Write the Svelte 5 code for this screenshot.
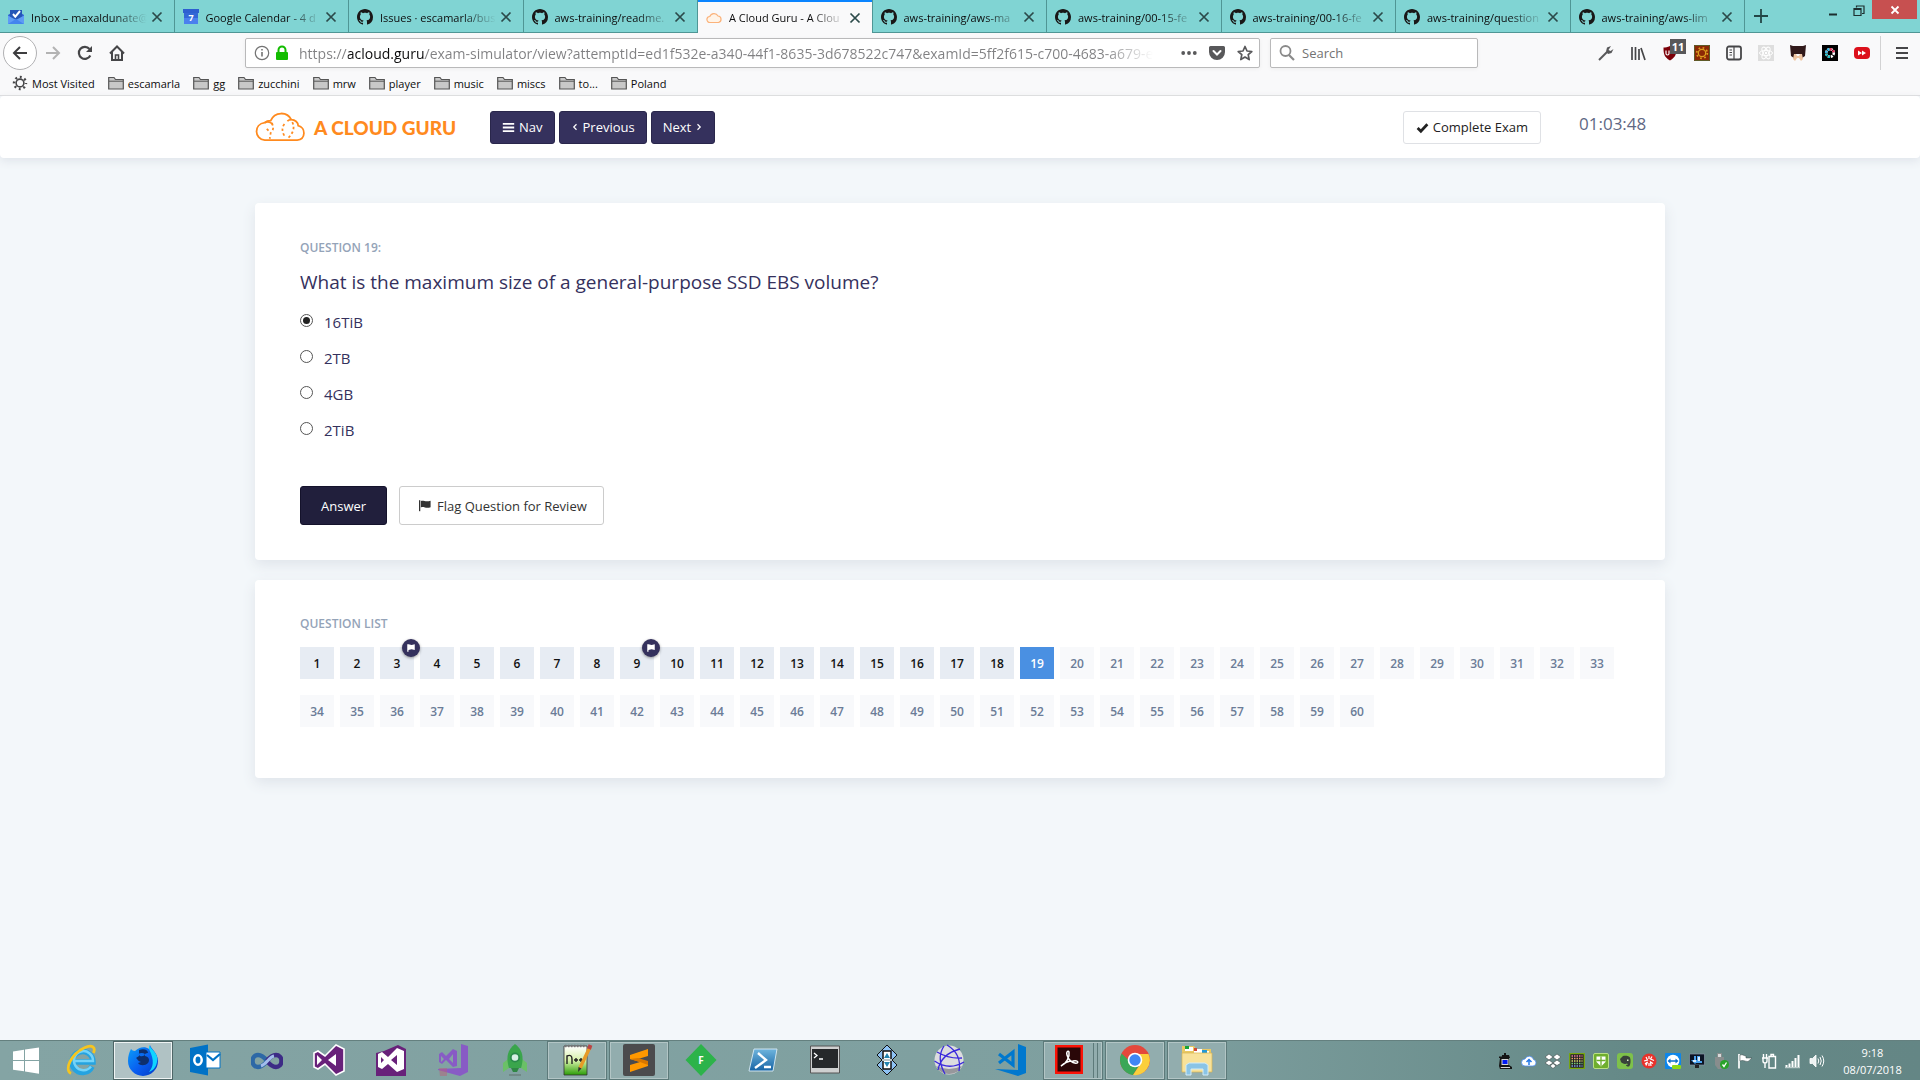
<script>
  const github = '<path fill="#191717" d="M8 0C3.58 0 0 3.58 0 8c0 3.54 2.29 6.53 5.47 7.59.4.07.55-.17.55-.38 0-.19-.01-.82-.01-1.49-2.01.37-2.53-.49-2.69-.94-.09-.23-.48-.94-.82-1.13-.28-.15-.68-.52-.01-.53.63-.01 1.08.58 1.23.82.72 1.21 1.87.87 2.33.66.07-.52.28-.87.51-1.07-1.78-.2-3.64-.89-3.64-3.95 0-.87.31-1.59.82-2.15-.08-.2-.36-1.02.08-2.12 0 0 .67-.21 2.2.82.64-.18 1.32-.27 2-.27s1.36.09 2 .27c1.53-1.04 2.2-.82 2.2-.82.44 1.1.16 1.92.08 2.12.51.56.82 1.27.82 2.15 0 3.07-1.87 3.75-3.65 3.95.29.25.54.73.54 1.48 0 1.07-.01 1.93-.01 2.2 0 .21.15.46.55.38A8.01 8.01 0 0 0 16 8c0-4.42-3.58-8-8-8Z"/>';

  // 16 x 16 drawings
  const small = {
    github,
    inbox: '<path fill="#2f5fd0" d="M0 6 8 1l8 5v9H0z"/><path fill="#2456b8" d="M2 1h12v9H2z"/><path d="m5 5 2.3 2.6L12 2" fill="none" stroke="#fff" stroke-width="2"/><path fill="#5e9cf5" d="M0 6.5 8 11l8-4.5V15H0z"/><path fill="#4384ee" d="m0 15 8-5 8 5z"/>',
    calendar: '<path fill="#4a80ee" d="M1 1h14v14H1z"/><path fill="#2d5fd0" d="M0 0h16v4H0z"/><path fill="#3367d6" d="M1 4h14v5H1z"/><text x="8" y="12" fill="#fff" font-family="Open Sans" font-size="9" font-weight="700" text-anchor="middle">7</text>',
    cloud: '<path d="M4 12.500a3 3 0 0 1-.2-6A4.500 4.500 0 0 1 12 6a3.300 3.300 0 0 1 .5 6.500z" fill="#fff4e8" stroke="#fbb27a" stroke-width="1.200"/>',
    close: '<path d="m3.500 3.500 9 9m0-9-9 9" stroke="#2b4a4a" stroke-width="1.700"/>',
    plus: '<path d="M8 1v14M1 8h14" stroke="#234646" stroke-width="1.800"/>',
    minimize: '<path d="M4 12.500h8" stroke="#1d2f2f" stroke-width="2"/>',
    restore: '<path d="M3 6.500h7v7H3zM3 7.500h7M5.500 5.500V4H13v7.500h-2" fill="none" stroke="#1d2f2f" stroke-width="1.200"/>',
    winclose: '<path d="m4.500 4.500 7 7m0-7-7 7" stroke="#fff" stroke-width="1.800"/>',
    back: '<path d="M15 8H2m6-6L2 8l6 6" fill="none" stroke="#3d3d3f" stroke-width="2"/>',
    forward: '<path d="M1 8h13M8 2l6 6-6 6" fill="none" stroke="#b3b3b3" stroke-width="2"/>',
    reload: '<path d="M13.300 10.500A6 6 0 1 1 12.500 4" fill="none" stroke="#464648" stroke-width="2.200"/><path fill="#464648" d="M15 1v6H9z"/>',
    home: '<path d="M1 8.500 8 1.500l7 7M3 7v8h10V7" fill="none" stroke="#464648" stroke-width="2"/><path d="M6.500 15v-5h3v5" fill="none" stroke="#464648" stroke-width="1.600"/>',
    info: '<circle cx="8" cy="8" r="6.700" fill="none" stroke="#737373" stroke-width="1.200"/><path d="M8 7v4.500M8 4v1.600" stroke="#737373" stroke-width="1.600"/>',
    lock: '<path d="M4.500 7V5a3.500 3.500 0 0 1 7 0v2" fill="none" stroke="#12bc00" stroke-width="2"/><rect x="2" y="7" width="12" height="8" rx="1" fill="#12bc00"/>',
    dots: '<g fill="#58585a"><circle cx="2.200" cy="8" r="1.900"/><circle cx="8" cy="8" r="1.900"/><circle cx="13.800" cy="8" r="1.900"/></g>',
    pocket: '<path fill="#58585a" d="M1.500 1h13A1.500 1.500 0 0 1 16 2.500V7A8 8 0 0 1 0 7V2.500A1.500 1.500 0 0 1 1.500 1z"/><path d="m4.500 6 3.500 3.500L11.500 6" fill="none" stroke="#fff" stroke-width="2" stroke-linecap="round"/>',
    star: '<path d="m8 1.500 2 4.500 4.800.5-3.600 3.200 1 4.900L8 12.100l-4.200 2.500 1-4.900L1.200 6.500 6 6z" fill="none" stroke="#58585a" stroke-width="1.700" stroke-linejoin="round"/>',
    search: '<circle cx="6.500" cy="6" r="5" fill="none" stroke="#8a8a8a" stroke-width="1.800"/><path d="m10 10 5 5" stroke="#8a8a8a" stroke-width="2.200"/>',
    wrench: '<path d="m1 15 8-8" stroke="#58585a" stroke-width="2"/><path fill="#58585a" d="M13 1 9 2.500 8 6.500 10 9l3.500-1L15.500 4l-3 2-2-1z"/>',
    library: '<path d="M2 2v13M5.500 2v13M9 4v11M11 3l4 12" stroke="#464648" stroke-width="1.700"/>',
    ublock: '<path fill="#7c0008" d="M8 1c2.500 1.500 4.500 1.500 6.500 1.500 0 6-.5 9.500-6.500 13C2 12 1.500 8.500 1.500 2.500 3.500 2.500 5.500 2.500 8 1z"/><path d="M4 5.500v3q0 1.500 1.500 1.500T7 8.500v-3" fill="none" stroke="#fff" stroke-width="1.200"/>',
    gearbox: '<path fill="#8c2806" d="M0 0h16v16H0z"/><path fill="none" stroke="#5e5b28" stroke-width="1" d="M.5.5h15v15H.5z"/><circle cx="8" cy="8" r="3.700" fill="none" stroke="#dc9e1e" stroke-width="1.300"/><circle cx="8" cy="8" r="5.300" fill="none" stroke="#dc9e1e" stroke-width="1.700" stroke-dasharray="1.700 2.460"/>',
    sidebar: '<rect x="1" y="1.500" width="14" height="13" rx="2" fill="none" stroke="#464648" stroke-width="1.800"/><path d="M8 2v12M3.500 5H6M3.500 7.500H6M3.500 10H6" stroke="#464648" stroke-width="1.200"/>',
    react: '<path fill="#dedede" d="M0 0h16v16H0z"/><g fill="none" stroke="#fff"><ellipse cx="8" cy="8" rx="6.500" ry="2.600"/><ellipse cx="8" cy="8" rx="6.500" ry="2.600" transform="rotate(60 8 8)"/><ellipse cx="8" cy="8" rx="6.500" ry="2.600" transform="rotate(120 8 8)"/></g><circle cx="8" cy="8" r="1.200" fill="#fff"/>',
    monkey: '<path fill="#31191a" d="m0 0 3 1h10l3-1-1 11-3 2-1-4H5l-1 4-3-2z"/><path fill="#eec5a2" d="M4 9h2l1 2h2l1-2h2l1 5-2 2-2-3H7l-2 3-2-2z"/>',
    shutter: '<path d="M0 0h16v16H0z"/><circle cx="8" cy="8" r="3.800" fill="none" stroke="#fff" stroke-width="2.600" stroke-dasharray="2 1"/><g fill="none" stroke-width="2.600" stroke-dasharray="2 1"><path stroke="#36b8e8" d="M4.200 8A3.800 3.800 0 0 1 8 4.200"/><path stroke="#e8365f" d="M8 4.200A3.800 3.800 0 0 1 11.800 8"/><path stroke="#22c3c8" d="M8 11.800A3.800 3.800 0 0 1 4.200 8"/></g>',
    forwardred: '<rect y="2" width="16" height="12" rx="4" fill="#dc101b"/><path fill="#fff" d="m4 5.500 4 2.500-4 2.500zm4 0L12 8l-4 2.500z"/>',
    menu: '<path d="M2 3h12M2 8h12M2 13h12" stroke="#464648" stroke-width="2"/>',
    cog: '<circle cx="8" cy="8" r="3.900" fill="none" stroke="#464648" stroke-width="1.600"/><circle cx="8" cy="8" r="6" fill="none" stroke="#464648" stroke-width="2.400" stroke-dasharray="1.900 2.812" stroke-dashoffset=".9"/>',
    folder: '<path d="M.7 14V2.500H6L7.500 4.500h7.800V14z" fill="#c8c8c8" stroke="#555" stroke-width="1.200"/><path d="M1 6.200h14" stroke="#555"/>',
    bars: '<path d="M1 3.500h14M1 8h14M1 12.500h14" stroke="currentColor" stroke-width="2.200"/>',
    check: '<path d="m2 8.500 4 4 8-8.500" fill="none" stroke="currentColor" stroke-width="3.400"/>',
    flag: '<path d="M2 1.500V15" stroke="currentColor" stroke-width="1.600"/><path fill="currentColor" d="M3.500 2.500C7 .8 9 4.500 15.500 2v8C10 12.500 7 8.500 3.500 10.500z"/>',
    badgeflag: '<path fill="currentColor" d="M2 2h2l5 1 5-1v9l-5-1-5 1v3H2z"/>',
    left: '<path d="M11 2.500 5.500 8l5.500 5.500" fill="none" stroke="currentColor" stroke-width="2.400"/>',
    right: '<path d="M5 2.500 10.500 8 5 13.500" fill="none" stroke="currentColor" stroke-width="2.400"/>',
    robot: '<path fill="#151515" d="M2 3.500h3V2h2V0h2v2h3l1 3H2zM3 5h9v7l3 2v2H3l-1-3z"/><path fill="#d4d4d4" d="M4.500 6h7v6h-7zM3.500 14H13v1H4z"/><path fill="#0018f5" d="M5.500 7h5v4h-5z"/>',
    upcloud: '<path fill="#fff" stroke="#4e8df0" stroke-width=".8" d="M4 13a3.500 3.500 0 0 1 0-7 4.500 4.500 0 0 1 8.500.5A3.300 3.300 0 0 1 12 13z"/><path d="M8 12V6.500M5.500 9 8 6.500 10.500 9" fill="none" stroke="#2478e8" stroke-width="1.500"/>',
    dropbox: '<g fill="#fff" stroke="#404a4a" stroke-width=".6"><path d="m4 1 4 3-4 3-4-3zM12 1l4 3-4 3-4-3zM4 7l4 3-4 2.500L0 10zM12 7l4 3-4 2.500L8 10zM8 10.500l3 2.500-3 2.500L5 13z"/></g>',
    grid: '<path fill="#221f25" stroke="#79a80e" stroke-width="1.300" d="M.7.700h14.600v14.600H.7z"/><g stroke-width="1.400" stroke-dasharray="1.500 1"><path stroke="#e87b9b" d="M2.500 3h11"/><path stroke="#e8a168" d="M2.500 5.500h11"/><path stroke="#d7d66a" d="M2.500 8h11"/><path stroke="#79cf74" d="M2.500 10.500h11"/><path stroke="#7f9cdf" d="M2.500 13h11"/></g>',
    shield: '<rect x=".5" y=".5" width="15" height="15" rx="1.500" fill="#6fae2e" stroke="#b9e084"/><path fill="#fff" d="M3.500 3.500h9V9L8 13.500 3.500 9z"/><path d="M8 3.500v9.500M3.500 7.500h9" stroke="#6fae2e" stroke-width="1.300"/>',
    evernote: '<rect width="16" height="16" rx="3" fill="#7ec14a"/><path fill="#39423a" d="M3 6 6 3c3-.5 6 0 7 1.500 1 3 .5 6.500-.5 8.500-1 1-3.500.5-3.500-1l2-.5-1-1c-2 1-5 0-6-1.500z"/><path fill="#dbf0c7" d="M10 6.500h1.500V8H10z"/>',
    authy: '<circle cx="8" cy="8" r="7.500" fill="#e8322b"/><path d="m5 4 1.500 3L3 8m8-4.500L9.500 6 13 7.500M5 12.500 6.500 9 4 11m8-.5L9.500 9l.5 4M8 3v3m0 4v3" fill="none" stroke="#fff" stroke-width="1.200"/>',
    teamviewer: '<rect width="16" height="16" rx="1" fill="#0d86ea"/><circle cx="8" cy="8" r="6.300" fill="#fff"/><path fill="#0d6fca" d="m2.500 8 3-2.500v1.800h5V5.500l3 2.500-3 2.500V8.700h-5v1.800z"/><rect x="7" y="12" width="9" height="4" rx="1" fill="#8fd916"/>',
    monitor: '<path fill="#0b1424" stroke="#8797a8" stroke-width=".7" d="M.5 1h15v11H.5z"/><path fill="#4ba3ef" d="M2 7h3V3h2v4h1V3h3v5h2v2H7l-1 1z"/><path fill="#d7ebfb" d="M9 4h2v4H9zM4 7h3v2H4z"/><path fill="#222" d="M6 12h4v3H6z"/>',
    usb: '<path fill="#888d8d" d="M4 0h5v4h2v8L8 16H5l-3-4V4h2z"/><path fill="#d8dada" d="M5 1h3v3H5z"/><circle cx="11.500" cy="11.500" r="4.500" fill="#29a32a"/><path d="m9.500 11.500 1.500 2 2.500-4" fill="none" stroke="#fff" stroke-width="1.300"/>',
    whiteflag: '<path d="M2 1v14.500" stroke="#fff" stroke-width="1.700"/><path fill="#fff" stroke="#384848" stroke-width=".5" d="M3 2c3-1 4 1 6 1v2h6c-2 1-2 3-4.500 3.500C8 8.500 6 6.500 3 8z"/>',
    battery: '<path d="M8 3.500h6.500V15H8zM10 3V1.500h2.500V3M1 5h6M2.500 1v4M5.500 1v4M2 5v3q0 2 2 2t2-2V5M4 10v5" fill="none" stroke="#fff" stroke-width="1.400"/>',
    signal: '<path d="M1.500 14v-2m3 2v-3.500m3 3.500V8m3 6V5m3 9V2" stroke="#fff" stroke-width="2"/><path d="M0 14.700h15" stroke="#fff" stroke-width=".7"/>',
    speaker: '<path d="M1 5.500h2.500L7 2v12l-3.500-3.500H1z" fill="#eef3f3" stroke="#fff" stroke-width=".8"/><path d="M9 5.500q1.500 2.500 0 5M11 4q2.500 4 0 8M13 2.500q3.500 5.500 0 11" fill="none" stroke="#fff"/>'
  };

  // 32 x 32 drawings
  const large = {
    start: '<path fill="#fff" d="m3 6.500 11-1.700V15H3zM15 4.600 29 2.500V15H15zM3 16h11v10.300L3 24.700zM15 16h14v12.800l-14-2.200z"/>',
    ie: '<path d="M27 22.500A10.500 10.500 0 1 1 28 18H8" fill="none" stroke="#25a3e0" stroke-width="5.500"/><path d="M26 22.500A9.500 9.500 0 1 1 28 17H9" fill="none" stroke="#74d3f8" stroke-width="2.500"/><path d="M6 29.500C-1 26 6 10 19 4c8-4 12-1 9.500 5" fill="none" stroke="#f5c520" stroke-width="2.800"/>',
    firefox: '<defs><linearGradient id="ffx" x1="0" x2="1" y2="1"><stop stop-color="#0aa3f8"/><stop offset=".55" stop-color="#085cf0"/><stop offset="1" stop-color="#053bc2"/></linearGradient></defs><path fill="url(#ffx)" d="M4 5c1 1 2 2 4 2 4-4 10-5 14-2l1-4c1 4 8 8 8 16A15 15 0 0 1 1 17C1 12 2 9 4 5z"/><path fill="#0e2f6d" d="M12 6c5-2 9 0 9 3-2 0-4 1-3 3 4 1 5 4 3 7-3 3-8 3-10 0l3-1c-4-1-3-3-5-4l3-2z"/><path fill="#10d5ff" d="M22 5V1c2 5 10 8 8 17-1 6-5 9-8 10 4-5 6-11 0-23z"/><path fill="#0a6cf0" d="M11 10q4-2 7 0-1 3-5 2z"/>',
    outlook: '<path fill="#0072c6" d="M1 4 19 .5v31L1 28z"/><path fill="#fff" stroke="#0072c6" d="M17 8h14v16H17z"/><path d="m18 11 6 5 7-6" fill="none" stroke="#0072c6" stroke-width="2.200"/><ellipse cx="9" cy="16" rx="3.700" ry="4.700" fill="none" stroke="#fff" stroke-width="2.500"/>',
    infinity: '<path d="M16 17c-3-4-5-6-9-6a5.500 6 0 0 0 0 12c4 0 6-2 9-6" fill="none" stroke="#2d68a6" stroke-width="4.500"/><path d="M16 17c3 4 5 6 9 6a5.500 6 0 0 0 0-12c-4 0-6 2-9 6" fill="none" stroke="#3d2b86" stroke-width="4.500"/><path d="M10 22c6-2 8-9 13-10" fill="none" stroke="#a3bdec" stroke-width="3"/>',
    vs: '<path fill="#68217a" stroke="#fff" stroke-width="1.600" d="m1 9 4-2 7 5L23 1l8 4v22l-8 4-11-11-7 5-4-2z"/><path fill="#fff" d="m4 11 5 5-5 5zm19-1v12l-8-6z"/>',
    vsold: '<path fill="#68217a" d="m1 9 8-2 14-6 8 4v27H1z"/><path fill="#fff" d="m3 10 4-2 6 5 9-9 7 3v18l-7 3-9-8-6 5-4-2z"/><path fill="#68217a" d="m6 13 3 3-3 3zm16-2v10l-6-5z"/>',
    vsblend: '<path fill="#885bc5" d="m24 0 7 2v26l-8 4-22-6v-1l23-1z"/><path fill="#885bc5" d="m2 10 3-2 4 4 7-7 4 2v15l-4 1-7-7-4 4-3-2z"/><path fill="#86a4a4" d="m4 12 3 3-3 3zm12-2v9l-4-4z"/><path fill="#b5627a" opacity=".5" d="M2 24h8v8H3z"/>',
    rocket: '<path fill="#6bc067" d="m9 15-5 4v9l6-4zm14 0 5 4v9l-6-4z"/><path fill="#3aa54c" d="M16 0c8 6 9 14 6 24H10C7 14 8 6 16 0z"/><circle cx="16" cy="13.500" r="4.200" fill="#d7efe4" stroke="#2a8a4a" stroke-width="1.800"/><path fill="#2f8744" d="M12 24h8l-2 4h-4z"/><path stroke="#6b807e" stroke-width="1.500" d="M10 31h12"/>',
    npp: '<defs><linearGradient id="npp" x2="0" y2="1"><stop stop-color="#fff"/><stop offset=".5" stop-color="#d6f2a8"/><stop offset="1" stop-color="#2b9d07"/></linearGradient></defs><path fill="url(#npp)" stroke="#333" stroke-width=".8" d="M3 2h23v29H3z"/><path stroke="#777" stroke-width="2.500" stroke-dasharray="1.500 1.500" d="M4 2h21"/><path d="M6 20V12q5-2 5 3v5M13 16h4m-2-2v4M18 16h4m-2-2v4" fill="none" stroke="#222" stroke-width="1.400"/><path d="M29 3 19 24" stroke="#e79b27" stroke-width="3.500"/><path d="m29.500 1-1.500 4" stroke="#b44" stroke-width="4"/><path fill="#333" d="m17 28 .5-5 3 1.500z"/>',
    sublime: '<rect width="32" height="32" rx="2" fill="#4b4b4d"/><path fill="#ff9800" d="m7 11 18-6v7l-10 3 10 3v4L7 28v-7l10-3-10-3z"/><path fill="#d87700" d="m7 15 10 3 8 3v-4L15 14z"/>',
    diamond: '<path fill="#2cb34a" d="m16 0 15.500 16L16 32 .5 16z"/><text x="16" y="20" fill="#fff" font-family="Open Sans" font-size="10" font-weight="700" text-anchor="middle">F</text>',
    powershell: '<defs><linearGradient id="psh" x2="0" y2="1"><stop stop-color="#6fb5dd"/><stop offset="1" stop-color="#1764a5"/></linearGradient></defs><path fill="url(#psh)" stroke="#cfe4ef" d="M7 5h23l-4 22H2z"/><path d="m11 9 8 7-11 8m9-1h7" fill="none" stroke="#fff" stroke-width="2.400"/>',
    cmd: '<path fill="#cfd0d0" stroke="#555" d="M1.500 2h29v27h-29z"/><path fill="#26282a" d="M3 5h26v19H3z"/><path d="m5 9 3 2.500L5 14m5 1h4" fill="none" stroke="#fff" stroke-width="1.300"/>',
    updown: '<path fill="#8ec3f4" stroke="#111" d="m16 1 10 10-5 5 5 5-10 10L6 21l5-5-5-5z"/><path fill="#fff" stroke="#111" stroke-width="1.500" d="M12 7h8v18h-8z"/><path fill="#2384b0" d="m16 9 3 5h-6zm0 14 3-5h-6z"/><path stroke="#b9c6cc" stroke-width="2" d="M11 16h10"/>',
    ball: '<circle cx="16" cy="16" r="14.500" fill="#dcdcdf"/><path fill="#97979c" d="M3 22q13 6 26 0a14.500 14.500 0 0 1-26 0z"/><g fill="none" stroke="#3a29dc" stroke-width="1.300"><path d="M4 8q12 7 25 6M1.500 17Q16 27 31 18M11 2Q3 14 12 30M14 1q15 9 12 26M27 5Q8 10 5 26"/></g>',
    vscode: '<path fill="#0078ce" d="m23 0 8 3v26l-8 3L0 25l23 1z"/><path d="m4 10 14 11V8L4 19" fill="none" stroke="#0078ce" stroke-width="3.200"/>',
    acrobat: '<path fill="#fa1408" d="M2 1h28v29H2z"/><path fill="#2a0708" d="M4.500 3.500h23v24h-23z"/><path d="M8 22c5-2 9-9 8-14-1-2-3 0-2 3 1 4 5 9 10 8 2-1 0-3-4-2-5 0-9 2-12 5z" fill="none" stroke="#fff" stroke-width="1.500"/>',
    chrome: '<circle cx="16" cy="16" r="15" fill="#e4483c"/><path fill="#3ba757" d="M2.500 9.500A15 15 0 0 0 14 31l7-11-5 2z"/><path fill="#fbcf3c" d="M14 31A15 15 0 0 0 29.500 10H16l6 9z"/><circle cx="16" cy="16" r="7.300" fill="#fff"/><circle cx="16" cy="16" r="5.700" fill="#4086f4"/>',
    explorer: '<path fill="#e9c863" d="M1 2h12l2 3h15v22H1z"/><path fill="#fff" d="M4 3h8v4H4zm9 2h8v4h-8zm7 2h8v4h-8z"/><path fill="#16a43a" d="M4 2h4v3H4z"/><path fill="#d14836" d="M13 4h3v3h-3z"/><path fill="#2299d8" d="M21 6h5v3h-5z"/><path fill="#f8e29a" stroke="#d9b650" stroke-width=".7" d="M1 9h30v19H1z"/><path fill="#8ac4e6" stroke="#d2ecf8" d="M5 31V21l3-2h16l3 2v10h-5v-6H10v6z"/>'
  };

  const tabs = [
    { icon: 'inbox', title: 'Inbox – maxaldunate@' },
    { icon: 'calendar', title: 'Google Calendar - 4 d' },
    { icon: 'github', title: 'Issues · escamarla/bus' },
    { icon: 'github', title: 'aws-training/readme.' },
    { icon: 'cloud', title: 'A Cloud Guru - A Clou', active: true },
    { icon: 'github', title: 'aws-training/aws-ma' },
    { icon: 'github', title: 'aws-training/00-15-fe' },
    { icon: 'github', title: 'aws-training/00-16-fe' },
    { icon: 'github', title: 'aws-training/question' },
    { icon: 'github', title: 'aws-training/aws-lim' }
  ];
  const bookmarks = ['escamarla', 'gg', 'zucchini', 'mrw', 'player', 'music', 'miscs', 'to...', 'Poland'];
  const tools = ['wrench', 'library', 'ublock', 'gearbox', 'sidebar', 'react', 'monkey', 'shutter', 'forwardred'];
  const apps = ['ie', 'firefox', 'outlook', 'infinity', 'vs', 'vsold', 'vsblend', 'rocket', 'npp', 'sublime', 'diamond', 'powershell', 'cmd', 'updown', 'ball', 'vscode', 'acrobat', 'chrome', 'explorer'];
  const running = ['npp', 'sublime', 'acrobat', 'chrome', 'explorer'];
  const tray = ['robot', 'upcloud', 'dropbox', 'grid', 'shield', 'evernote', 'authy', 'teamviewer', 'monitor', 'usb', 'whiteflag', 'battery', 'signal', 'speaker'];
  const options = ['16TiB', '2TB', '4GB', '2TiB'];
  const questions = Array.from({ length: 60 }, (_, i) => i + 1);
  const flagged = [3, 9];

  let current = $state(19);
  let answer = $state('16TiB');
  let url = $state('https://acloud.guru/exam-simulator/view?attemptId=ed1f532e-a340-44f1-8635-3d678522c747&examId=5ff2f615-c700-4683-a679-e49');
</script>

{#snippet icon(name, cls = 'i16')}
  <svg class={cls} viewBox="0 0 16 16" aria-hidden="true">{@html small[name]}</svg>
{/snippet}

<div class="screen">
  <div class="tabbar">
    <div class="tabs" role="tablist">
      {#each tabs as tab}
        <div class="tab" class:active={tab.active}>
          {@render icon(tab.icon)}
          <button class="tabtitle" role="tab" aria-selected={!!tab.active}>{tab.title}</button>
          <button class="plain" aria-label="Close tab">{@render icon('close')}</button>
        </div>
      {/each}
    </div>
    <div class="window">
      <button class="plain newtab" aria-label="New tab">{@render icon('plus')}</button>
      <button class="plain winbtn" aria-label="Minimize">{@render icon('minimize')}</button>
      <button class="plain winbtn" aria-label="Restore">{@render icon('restore')}</button>
      <button class="plain winbtn red" aria-label="Close window">{@render icon('winclose')}</button>
    </div>
  </div>

  <div class="toolbar">
    <div class="navs">
      <button class="plain round" aria-label="Back">{@render icon('back')}</button>
      <button class="plain" aria-label="Forward">{@render icon('forward')}</button>
      <button class="plain" aria-label="Reload">{@render icon('reload')}</button>
      <button class="plain" aria-label="Home">{@render icon('home')}</button>
    </div>
    <div class="field urlfield">
      {@render icon('info')}
      {@render icon('lock')}
      <input class="url" aria-label="Address" bind:value={url} spellcheck="false" />
      <button class="plain" aria-label="Page actions">{@render icon('dots')}</button>
      <button class="plain" aria-label="Save to Pocket">{@render icon('pocket')}</button>
      <button class="plain" aria-label="Bookmark">{@render icon('star')}</button>
    </div>
    <div class="field searchfield">
      {@render icon('search')}
      <input aria-label="Search" placeholder="Search" />
    </div>
    <div class="tools">
      {#each tools as tool}
        <button class="plain tool" aria-label={tool}>
          {@render icon(tool)}
          {#if tool === 'ublock'}<span class="count">11</span>{/if}
        </button>
      {/each}
      <button class="plain menu" aria-label="Menu">{@render icon('menu')}</button>
    </div>
  </div>

  <nav class="bookmarks">
    <a href="#most-visited">{@render icon('cog')}Most Visited</a>
    {#each bookmarks as mark}
      <a href="#bookmark">{@render icon('folder')}{mark}</a>
    {/each}
  </nav>

  <div class="page">
    <header>
      <div class="container bar">
        <a class="logo" href="#home">
          <svg viewBox="0 0 52 30" class="cloud" aria-hidden="true">
            <g fill="none" stroke="#ff8a1e" stroke-width="1.800">
              <path d="M10 28.500C-1 27-1.500 12 10 10.500 12 8.500 14 8.500 16 8.500 20-1 33-1 37 7.500c4 0 7 3 7 6 8 2 8 14-1 15z" />
              <path d="M10 10.500c3-1.500 6-.5 8 1.500M37 7.500c-2 0-3 .5-4 1.500" />
              <path stroke-dasharray="2.500 2.500" d="M17 11q3 5 0 9M12 17l4 4-1 6M30 12q-4 5 0 12M38 10q4 8-4 16" />
            </g>
          </svg>
          <span>A CLOUD GURU</span>
        </a>
        <div class="steps">
          <button class="btn dark">{@render icon('bars', 'i13')}Nav</button>
          <button class="btn dark">{@render icon('left', 'i8')}Previous</button>
          <button class="btn dark">Next{@render icon('right', 'i8')}</button>
        </div>
        <button class="btn light complete">{@render icon('check', 'i13')}Complete Exam</button>
        <time class="timer">01:03:48</time>
      </div>
    </header>

    <main class="container">
      <section class="card">
        <h2>QUESTION 19:</h2>
        <p class="question">What is the maximum size of a general-purpose SSD EBS volume?</p>
        <div class="options">
          {#each options as option}
            <label><input type="radio" name="answer" value={option} bind:group={answer} /><span>{option}</span></label>
          {/each}
        </div>
        <div class="actions">
          <button class="btn submit">Answer</button>
          <button class="btn review">{@render icon('flag', 'i13')}Flag Question for Review</button>
        </div>
      </section>

      <section class="card list">
        <h2>QUESTION LIST</h2>
        <div class="numbers">
          {#each questions as n}
            <button class="num" class:done={n < 19} class:current={n === current} onclick={() => (current = n)}>
              {n}
              {#if flagged.includes(n)}<span class="badge">{@render icon('badgeflag', 'i10')}</span>{/if}
            </button>
          {/each}
        </div>
      </section>
    </main>
  </div>

  <footer class="taskbar">
    <button class="plain startbtn" aria-label="Start"><svg class="i32" viewBox="0 0 32 32">{@html large.start}</svg></button>
    <div class="apps">
      {#each apps as app}
        <button class="app" class:running={running.includes(app)} class:focused={app === 'firefox'} class:stacked={app === 'acrobat'} aria-label={app}>
          <svg class="i32" viewBox="0 0 32 32">{@html large[app]}</svg>
        </button>
      {/each}
    </div>
    <div class="tray">
      {#each tray as item}{@render icon(item)}{/each}
    </div>
    <div class="clock"><span>9:18</span><span>08/07/2018</span></div>
  </footer>
</div>

<style>
  :global(body) {
    margin: 0;
  }
  * {
    box-sizing: border-box;
  }
  .screen {
    display: flex;
    flex-direction: column;
    min-height: 100vh;
    font-family: 'Open Sans', 'Noto Sans', sans-serif;
    font-size: 11px;
    color: #0c0c0d;
    background: #f3f7fa;
  }
  button,
  input {
    font: inherit;
    color: inherit;
  }
  svg {
    display: block;
    flex: none;
  }
  .i8 { width: 8px; height: 10px; }
  .i10 { width: 10px; height: 10px; }
  .i13 { width: 13px; height: 13px; }
  .i16 { width: 16px; height: 16px; }
  .i32 { width: 32px; height: 32px; }
  .plain {
    display: flex;
    align-items: center;
    justify-content: center;
    padding: 0;
    border: 0;
    background: none;
  }

  .tabbar {
    display: flex;
    height: 33px;
    background: #80d4d3;
    border-bottom: 1px solid #4f9695;
  }
  .tabs {
    display: flex;
    flex: 1;
    min-width: 0;
  }
  .tab {
    display: flex;
    flex: 1 1 0;
    min-width: 0;
    align-items: center;
    gap: 7px;
    padding: 2px 9px 0 8px;
    border-right: 1px solid #4f9695;
  }
  .tab.active {
    height: 33px;
    background: #f9f9fa;
    box-shadow: inset 0 2px #0a84ff;
  }
  .tabtitle {
    flex: 1;
    min-width: 0;
    margin-right: -5px;
    padding: 0;
    border: 0;
    overflow: hidden;
    background: none;
    text-align: left;
    white-space: nowrap;
    mask-image: linear-gradient(90deg, #000 calc(100% - 34px), transparent);
  }
  .window {
    display: flex;
    flex: none;
    width: 175px;
    padding-right: 3px;
  }
  .newtab {
    width: 32px;
  }
  .winbtn {
    width: 26px;
    height: 19px;
  }
  .newtab + .winbtn {
    margin-left: auto;
  }
  .red {
    width: 45px;
    background: #c75050;
  }

  .toolbar {
    display: flex;
    align-items: center;
    height: 40px;
    padding: 0 9px 0 3px;
    background: #f9f9fa;
  }
  .navs {
    display: flex;
    flex: none;
    align-items: center;
    gap: 16px;
    width: 242px;
  }
  .round {
    width: 34px;
    height: 34px;
    border: 1px solid #b1b1b3;
    border-radius: 50%;
    background: #fff;
  }
  .round + .plain {
    margin-left: -8px;
  }
  .field {
    display: flex;
    align-items: center;
    height: 30px;
    padding: 0 6px 0 8px;
    border: 1px solid #b9b9ba;
    border-radius: 2px;
    background: #fff;
    box-shadow: 0 1px 4px #0000000d;
  }
  .field input {
    min-width: 0;
    flex: 1;
    padding: 0;
    border: 0;
    outline: 0;
    background: none;
    font-size: 13px;
  }
  .urlfield {
    flex: 1;
    gap: 12px;
  }
  .urlfield > svg + svg {
    margin-left: -8px;
  }
  .urlfield .url {
    margin: 0 16px 0 -3px;
    color: transparent;
    font-size: 14px;
    background: linear-gradient(90deg, #808082 49px, #0c0c0d 49px, #0c0c0d 126px, #808082 126px);
    background-clip: text;
    mask-image: linear-gradient(90deg, #000 calc(100% - 50px), transparent);
  }
  .searchfield {
    flex: none;
    width: 208px;
    gap: 7px;
    margin-left: 10px;
  }
  .searchfield input::placeholder {
    color: #737373;
    opacity: 1;
  }
  .tools {
    display: flex;
    flex: none;
    align-items: center;
    margin-left: 112px;
  }
  .tool {
    position: relative;
    width: 32px;
    height: 32px;
  }
  .count {
    position: absolute;
    top: 2px;
    right: 0;
    width: 16px;
    height: 15px;
    background: #58585a;
    color: #fff;
    font-size: 11px;
    font-weight: 700;
    line-height: 15px;
  }
  .menu {
    width: 31px;
    height: 34px;
    margin-left: 2px;
    padding-left: 12px;
    border-left: 1px solid #d2d2d3;
  }

  .bookmarks {
    display: flex;
    height: 23px;
    gap: 13px;
    padding: 0 12px 2px;
    background: #f9f9fa;
    border-bottom: 1px solid #dcdcdd;
  }
  .bookmarks a {
    display: flex;
    align-items: center;
    gap: 4px;
    color: #0c0c0d;
    text-decoration: none;
  }

  .page {
    flex: 1;
  }
  .container {
    width: calc(100% - 60px);
    max-width: 1410px;
    margin: 0 auto;
  }
  header {
    background: #fff;
    border-radius: 4px;
    box-shadow: 0 3px 10px #dfe4ea;
  }
  .bar {
    display: flex;
    align-items: center;
    height: 62px;
  }
  .logo {
    display: flex;
    align-items: center;
    gap: 8px;
    width: 235px;
    color: #ff8a1e;
    font-family: Lato, sans-serif;
    font-size: 19px;
    font-weight: 900;
    text-decoration: none;
    white-space: nowrap;
  }
  .cloud {
    width: 51px;
    height: 30px;
  }
  .steps {
    display: flex;
    gap: 4px;
  }
  .btn {
    display: flex;
    align-items: center;
    justify-content: center;
    gap: 4px;
    height: 33px;
    padding: 0 11px;
    border: 1px solid #29264b;
    border-radius: 3px;
    font-size: 13px;
    font-weight: 500;
    white-space: nowrap;
  }
  .dark {
    background: #35315d;
    color: #fff;
  }
  .light {
    border-color: #dfe1e5;
    background: #fff;
    color: #222;
  }
  .complete {
    margin-left: auto;
    padding: 0 12px;
  }
  .timer {
    width: 124px;
    padding: 0 0 7px 38px;
    color: #5f6884;
    font-size: 17px;
  }

  main {
    display: flex;
    flex-direction: column;
    gap: 20px;
    padding: 45px 0;
  }
  .card {
    padding: 35px 45px;
    border-radius: 4px;
    background: #fff;
    box-shadow: 0 5px 14px #dfe4ea;
  }
  h2 {
    margin: 0;
    color: #94a3b8;
    font-size: 12px;
    font-weight: 600;
    line-height: 20px;
  }
  .question {
    margin: 10px 0 8px;
    color: #35315d;
    font-size: 19px;
    line-height: 28px;
  }
  .options label {
    display: flex;
    align-items: center;
    gap: 11px;
    height: 36px;
    color: #35315d;
    font-size: 15px;
  }
  .options input {
    display: grid;
    place-items: center;
    width: 13px;
    height: 13px;
    margin: 0 0 3px;
    border: 1px solid #555;
    border-radius: 50%;
    appearance: none;
    background: #fff;
  }
  .options input:checked::before {
    content: '';
    width: 7px;
    height: 7px;
    border-radius: 50%;
    background: #222;
  }
  .actions {
    display: flex;
    gap: 12px;
    margin-top: 38px;
  }
  .actions .btn {
    height: 39px;
    padding: 0 20px;
  }
  .submit {
    border-color: #14122b;
    background: #211f3c;
    color: #fff;
  }
  .actions .review {
    gap: 6px;
    padding: 0 16px 0 18px;
    border-color: #ccc;
    background: #fff;
    color: #333;
  }
  .list {
    padding: 34px 45px 51px;
  }
  .numbers {
    display: flex;
    flex-wrap: wrap;
    gap: 16px 6px;
    margin-top: 13px;
  }
  .num {
    position: relative;
    width: 34px;
    height: 32px;
    padding: 0;
    border: 0;
    background: #f8f9fb;
    color: #6b7c97;
    font-size: 12px;
    font-weight: 600;
  }
  .num.done {
    background: #e7ecf3;
    color: #111;
  }
  .num.current {
    background: #4a90e2;
    color: #fff;
  }
  .badge {
    position: absolute;
    top: -8px;
    right: -6px;
    z-index: 1;
    display: grid;
    place-items: center;
    width: 18px;
    height: 18px;
    border-radius: 50%;
    background: #35315d;
    color: #fff;
    box-shadow: 0 1px 3px #0006;
  }

  .taskbar {
    display: flex;
    align-items: center;
    height: 40px;
    border-top: 1px solid #64807f;
    background: linear-gradient(90deg, #84a4a4, #7e9f9f 60%, #658987 85%, #648685);
  }
  .startbtn {
    width: 51px;
  }
  .apps {
    display: flex;
    flex: 1;
    gap: 2px;
  }
  .app {
    display: grid;
    place-items: center;
    width: 60px;
    height: 39px;
    padding: 0 0 2px;
    border: 1px solid transparent;
    background: none;
  }
  .app.running {
    border-color: #5d7a7a;
    background: #92adae;
    box-shadow: inset 0 0 0 1px #b2c5c5;
  }
  .app.focused {
    border-color: #4e6667;
    background: #b0c2c4;
    box-shadow: inset 0 0 0 1px #eef3f3;
  }
  .app.stacked {
    padding-right: 8px;
    box-shadow: inset 0 0 0 1px #b2c5c5, inset -4px 0 #92adae, inset -5px 0 #5d7a7a, inset -8px 0 #92adae, inset -9px 0 #5d7a7a;
  }
  .tray {
    display: flex;
    gap: 8px;
  }
  .clock {
    display: flex;
    flex-direction: column;
    align-items: center;
    width: 95px;
    color: #fff;
    line-height: 17px;
  }
</style>
